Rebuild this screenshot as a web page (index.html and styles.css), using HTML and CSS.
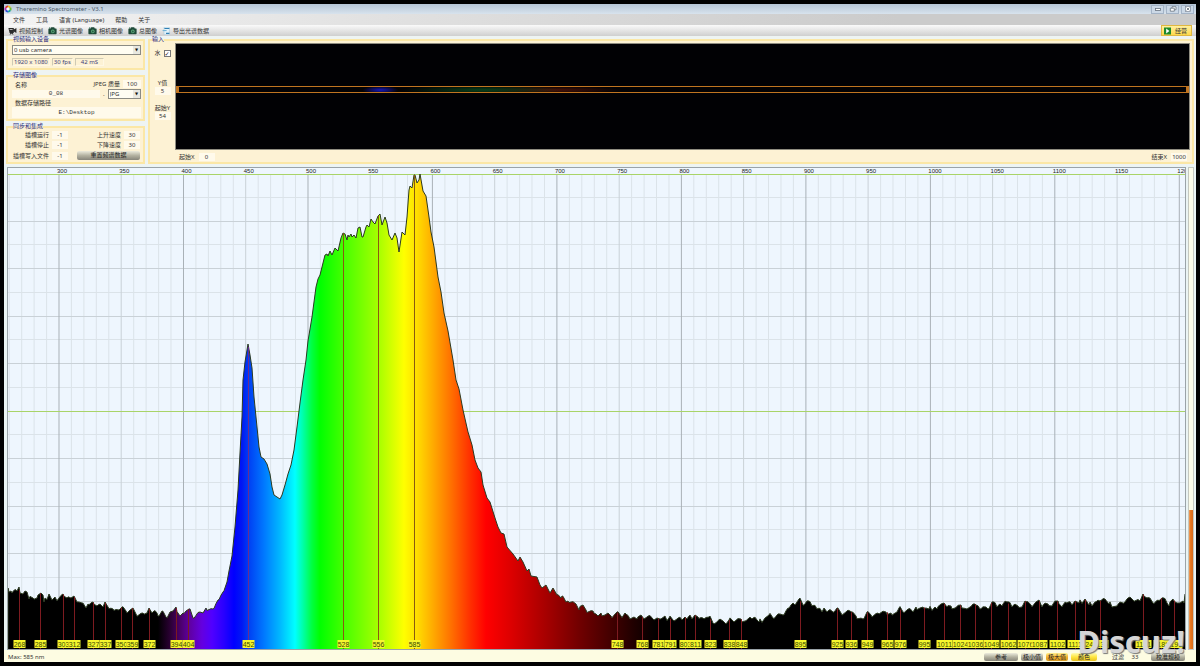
FILE: index.html
```
<!DOCTYPE html>
<html lang="zh-CN">
<head>
<meta charset="utf-8">
<title>Theremino Spectrometer - V3.1</title>
<link rel="stylesheet" href="styles.css">
</head>
<body>
<svg class="defs" aria-hidden="true">
  <symbol id="camera" viewBox="0 0 9 8">
    <path d="M2.6 1.6 L3.2 .3 H6.2 L6.8 1.6 H8 Q8.6 1.6 8.6 2.3 V6.6 Q8.6 7.3 8 7.3 H1 Q.4 7.3 .4 6.6 V2.3 Q.4 1.6 1 1.6Z" fill="#1f4a38"/>
    <circle cx="4.8" cy="4.4" r="1.8" fill="#5fae7c"/><circle cx="4.8" cy="4.4" r="1" fill="#2a5a44"/>
    <path d="M1 .6h1.4v1H1z" fill="#2f6a50"/>
  </symbol>
</svg>
<main class="window">
  <header class="titlebar">
    <svg class="logo" viewBox="0 0 10 10" aria-hidden="true">
      <g fill="none" stroke-width="2.4">
        <path d="M5 1.8A3.2 3.2 0 0 1 7.8 3.4" stroke="#e8c61c"/>
        <path d="M7.8 3.4A3.2 3.2 0 0 1 7.8 6.6" stroke="#6cc030"/>
        <path d="M7.8 6.6A3.2 3.2 0 0 1 5 8.2" stroke="#1fa6a0"/>
        <path d="M5 8.2A3.2 3.2 0 0 1 2.2 6.6" stroke="#2c55d8"/>
        <path d="M2.2 6.6A3.2 3.2 0 0 1 2.2 3.4" stroke="#b02cb8"/>
        <path d="M2.2 3.4A3.2 3.2 0 0 1 5 1.8" stroke="#e2402a"/>
      </g>
      <circle cx="5" cy="5" r="1.8" fill="#fff"/>
    </svg>
    <h1>Theremino Spectrometer - V3.1</h1>
    <div class="winbtns">
      <button aria-label="最小化"><svg viewBox="0 0 8 6"><rect x="1.5" y="2.5" width="5" height="2" fill="#fff" stroke="#66717e" stroke-width=".8"/></svg></button>
      <button aria-label="还原"><svg viewBox="0 0 8 6"><path d="M3 .7h4v3H3z" fill="#fff" stroke="#66717e" stroke-width=".8"/><path d="M1.3 2.2h4v3h-4z" fill="#fff" stroke="#66717e" stroke-width=".8"/></svg></button>
      <button aria-label="关闭"><svg viewBox="0 0 8 6"><rect x="1.5" y=".5" width="5" height="5" fill="#fff" stroke="#7c8794" stroke-width=".7"/><path d="M2.6 1.6l2.8 2.8M5.4 1.6L2.6 4.4" stroke="#5e6874" stroke-width=".8"/></svg></button>
    </div>
  </header>
  <nav class="menu">
    <button>文件</button><button>工具</button><button>语言 (Language)</button><button>帮助</button><button>关于</button>
  </nav>
  <div class="toolbar">
    <button><svg class="ic" viewBox="0 0 9 8"><path d="M.4 1h5.4v1.4L8.4 1v5L5.8 4.6V6H4.6l1 1.6h-1L3.6 6.4 2.4 7.6H1.6L2.4 6H1.6z" fill="#2b2b2b"/><path d="M1.6 2h3v1h-3z" fill="#b8b8b8"/></svg>视频控制</button>
    <button><svg class="ic"><use href="#camera"/></svg>光谱图像</button>
    <button><svg class="ic"><use href="#camera"/></svg>相机图像</button>
    <button><svg class="ic"><use href="#camera"/></svg>总图像</button>
    <button><svg class="ic" viewBox="0 0 9 8"><path d="M2 .3h5.4v7.4H2z" fill="#e4f3fa" stroke="#9cc4d8" stroke-width=".5"/><path d="M2.4 1h5v1.1h-5zM4 5.8h3.4v1.3H4z" fill="#2f7fb4"/><path d="M.6 3.6h4" stroke="#6ab0d4"/></svg>导出光谱数据</button>
    <button class="run"><svg class="ic" viewBox="0 0 9 8"><rect x="1" y=".5" width="7" height="7" fill="#1c8a2c"/><path d="M3.2 1.6L6.4 4 3.2 6.4z" fill="#fff"/></svg>经营</button>
  </div>

  <section class="controls">
    <div class="side">
      <fieldset class="device">
        <legend>视频输入设备</legend>
        <span class="drop"><select aria-label="视频输入设备"><option>0 usb camera</option></select></span>
        <div class="info"><span>1920 x 1080</span><span>30 fps</span><span>42 mS</span></div>
      </fieldset>
      <fieldset class="store">
        <legend>存储图像</legend>
        <div class="line"><label class="name" for="fname">名称</label><label for="q">JPEG 质量</label><input id="q" class="num" value="100"></div>
        <div class="line file"><input id="fname" class="mono" value="0_08"><span>.</span><span class="drop"><select aria-label="格式"><option>JPG</option></select></span></div>
        <label class="path" for="dir">数据存储路径</label>
        <input id="dir" class="mono" value="E:\Desktop">
      </fieldset>
      <fieldset class="sync">
        <legend>同步和集成</legend>
        <div class="slots">
          <label for="s1">插槽运行</label><input id="s1" value="-1"><label for="up">上升速度</label><input id="up" value="30">
          <label for="s2">插槽停止</label><input id="s2" value="-1"><label for="dn">下降速度</label><input id="dn" value="30">
          <label for="s3">插槽写入文件</label><input id="s3" value="-1"><button class="pill">重置频谱数据</button>
        </div>
      </fieldset>
    </div>
    <fieldset class="input">
      <legend>输入</legend>
      <div class="feed">
        <div class="ycol">
          <label class="flip">水<input type="checkbox" checked></label>
          <label for="yv">Y值</label><input id="yv" value="5">
          <label class="ystart" for="ys">起始Y</label><input id="ys" value="54">
        </div>
        <div class="video"><div class="band"></div></div>
      </div>
      <div class="xrow"><label for="xs">起始X</label><input id="xs" value="0"><label class="end" for="xe">结束X</label><input id="xe" value="1000"></div>
    </fieldset>
  </section>

  <section class="plot">
    <svg id="chart" class="chart" role="img" aria-label="光谱"></svg>
    <div class="level"><div class="fill"></div></div>
  </section>

  <footer class="status">
    <span class="max">Max: 585 nm</span>
    <button class="pill ref">参考</button>
    <button class="pill">极小值</button>
    <button class="pill gold">极大值</button>
    <button class="pill yellow">颜色</button>
    <label for="filter">过滤</label><input id="filter" value="33">
    <button class="pill scale">校准规模</button>
  </footer>
  <div class="watermark">Discuz!</div>
</main>
<script src="chart.js"></script>
</body>
</html>
```
FILE: styles.css
```
* { box-sizing: border-box; }
body {
  margin: 0;
  background: #000;
  color: #333;
  font: 6px/8px "Noto Sans", "Noto Sans CJK SC", sans-serif;
}
button, input, select {
  appearance: none;
  margin: 0;
  padding: 0;
  border: 0;
  border-radius: 0;
  background: none;
  color: inherit;
  font: inherit;
}
input, select { min-width: 0; }
input { height: 8px; background: #fffaeb; text-align: center; }
.defs { position: absolute; width: 0; height: 0; }
.window {
  position: relative;
  display: flex;
  flex-direction: column;
  min-height: calc(100vh - 8px);
  margin: 4px;
  background: #eef4f3;
}

.titlebar {
  display: flex;
  align-items: center;
  height: 10px;
  padding: 0 2px 0 0;
  background: linear-gradient(#b4c4d4, #d8e3ed);
}
.logo { width: 8px; height: 8px; margin-right: 4px; }
.titlebar h1 { flex: 1; margin: 0; font-size: 6px; font-weight: 400; color: #4a5868; }
.winbtns { display: flex; gap: 2px; }
.winbtns button {
  display: flex;
  justify-content: center;
  align-items: center;
  width: 13px;
  height: 9px;
  border: 1px solid #a3b3c6;
  background: #cbd8e6;
}
.winbtns svg { width: 8px; height: 6px; }

.menu {
  display: flex;
  gap: 11px;
  height: 11px;
  padding-left: 9px;
  background: linear-gradient(90deg, #f3f3f3, #e2e2e2 30%, #cbcbcb 75%);
}
.toolbar {
  display: flex;
  gap: 5px;
  height: 11px;
  padding: 0 4px;
  background: linear-gradient(#fafafa, #cfcfcf);
}
.toolbar button { display: flex; align-items: center; gap: 2px; }
.ic { width: 9px; height: 8px; }
.toolbar .run {
  gap: 3px;
  width: 31px;
  margin-left: auto;
  padding-left: 1px;
  border: 1px solid #e0b840;
  background: linear-gradient(#fff0a0, #ffd84a);
}

.controls { display: flex; gap: 3px; padding: 0 2px 2px; }
.side { display: flex; flex-direction: column; width: 139px; gap: 2px; }
fieldset {
  min-width: 0;
  margin: 0;
  padding: 1px 3px 2px;
  border: 2px solid #fbe7a6;
  background: #fdf2d4;
}
legend { height: 7px; margin-left: 1px; padding: 0; line-height: 7px; color: #2b2b7a; }
.device { padding: 2px 2px 2px 4px; }
.drop { position: relative; display: block; }
.drop select {
  display: block;
  width: 100%;
  height: 10px;
  padding-left: 1px;
  border: 1px solid #8b8b83;
  background: #fffdf2;
}
.drop::after {
  content: "▼";
  position: absolute;
  top: 1px;
  right: 1px;
  width: 7px;
  height: 8px;
  background: #e8e8e0;
  color: #111;
  font: 4px/8px "DejaVu Sans", sans-serif;
  text-align: center;
  pointer-events: none;
}
.info { display: flex; gap: 2px; margin-top: 3px; color: #42427c; }
.info span { padding: 0 1px; border: 1px solid; border-color: #cfcab4 #fff8e4 #fff8e4 #cfcab4; line-height: 6px; }
.info span:last-child { padding: 0 5px; }
.mono { font-family: "Liberation Mono", monospace; }
.line { display: flex; align-items: center; gap: 3px; }
.store { padding: 0 2px 1px 4px; }
.store .name { flex: 1; padding: 2px 0 0 3px; }
.num { width: 18px; }
.file .mono { width: 88px; }
.file .drop { flex: 1; }
.path { display: block; padding-left: 3px; }
.path + input { display: block; width: 100%; height: 11px; }
.slots {
  display: grid;
  grid-template-columns: 38px 16px 50px 16px;
  gap: 2px 3px;
  align-items: center;
  text-align: right;
}
.sync { padding: 1px 0 2px 3px; }
.sync legend { margin-left: 2px; }
.pill {
  height: 9px;
  padding: 0 2px;
  border-radius: 2px;
  background: linear-gradient(#ecebdc, #b3b1a0 50%, #87857a);
  line-height: 9px;
}
.slots .pill { grid-column: 3 / 5; margin-left: 6px; color: #222; }

.input { flex: 1; display: flex; flex-direction: column; padding: 0 2px 1px 1px; }
.feed { display: flex; flex: 1; gap: 1px; }
.ycol { display: flex; flex-direction: column; align-items: center; width: 23px; padding-top: 6px; }
.ycol > input { width: 16px; }
.flip { display: flex; align-items: center; gap: 3px; margin-bottom: 22px; }
.flip input { width: 7px; height: 7px; border: 1px solid #777; background: #fff; }
.flip input:checked::before {
  content: "✓";
  display: block;
  color: #111;
  font: 6px/5px "DejaVu Sans", sans-serif;
}
.ystart { margin-top: 9px; }
.video { position: relative; flex: 1; border: 1px solid #8f8c80; background: #010104; }
.band {
  position: absolute;
  top: 40%;
  left: 0;
  right: 0;
  height: 7px;
  border: 1px solid #c07420;
  border-width: 1px 3px;
  background:
    radial-gradient(ellipse 18px 4px at 20% 60%, #1616b8, transparent),
    radial-gradient(ellipse 8% 5px at 30% 60%, #08401a, transparent),
    radial-gradient(ellipse 7% 4px at 37% 60%, #4a1208, transparent),
    #030204;
}
.xrow { display: flex; height: 11px; padding: 3px 3px 0 28px; gap: 4px; }
.xrow input { width: 16px; }
.xrow .end { margin-left: auto; }

.plot { display: flex; flex: 1; gap: 2px; padding: 1px 2px 0 3px; background: #eaf4f4; }
.chart { flex: 1; min-width: 0; height: auto; border: 1px solid #9aa3a8; background: #eef6fe; overflow: hidden; }
.chart text { font: 6px "Liberation Sans", sans-serif; fill: #222; }
.chart .tag text { font-size: 7px; fill: #3a4a00; text-anchor: middle; }
.chart .tag rect { fill: #f6f62e; }
.chart path { fill: none; vector-effect: non-scaling-stroke; }
.chart .minor { stroke: #dbe3e9; }
.chart .half { stroke: #c9d1d7; }
.chart .major { stroke: #a9b1b7; }
.chart .green { stroke: #a9d468; shape-rendering: crispEdges; }
.chart .area { fill: url(#spectrum); stroke: #2c3a20; stroke-width: 1px; }
.chart .peak { stroke: #7d1b20; }
.chart .peak.low { stroke: #6a2a90; }
.chart .peak.tall { stroke: #8a5a10; }
.level { display: flex; flex-direction: column; justify-content: flex-end; width: 6px; border: 1px solid #c4c8c0; background: #fbfbe8; }
.level .fill { height: 29%; background: linear-gradient(90deg, #f0a060, #e87820 40%, #d86c1c); }

.status { display: flex; align-items: center; gap: 3px; height: 12px; padding: 2px 11px 0 4px; background: #fdfce2; }
.status .max { flex: 1; }
.status .pill { min-width: 22px; height: 8px; line-height: 8px; color: #222; }
.status .ref, .status .scale { width: 34px; }
.status .gold { background: linear-gradient(#fff08a, #f0b030 50%, #d89a20); }
.status .yellow { width: 26px; background: linear-gradient(#fffbb0, #ffe640 50%, #e8c020); }
.status label { margin-left: 12px; }
.status input { width: 16px; margin-right: 5px; background: none; }
.watermark {
  position: absolute;
  right: 11px;
  bottom: 3px;
  color: #d6d6d6;
  font: 700 31px/36px "Noto Sans", sans-serif;
  text-shadow: 1px 1px 1px #777;
  pointer-events: none;
}
```
FILE: chart.js
```
// Drawing space of the plot: x 8..1185, y 168..649.
const X0 = 8, Y0 = 168, W = 1177, H = 481, BASE = 649;
const xOf = nm => 59 + (nm - 300) * 1.2448;
const pct = x => ((x - X0) / W * 100) + "%";

const curve = `8,588 9,592 11,591 12,593 17,591 19,587 20,593 23,594 25,591 27,592 29,599 33,598 37,598 38,595 41,593 43,595 44,602 49,594 51,598 55,597 56,599 63,594 67,598 71,598 74,596 77,602 79,602 82,603 86,608 88,604 93,602 97,606 103,607 105,602 108,607 113,609 119,610 122,607 126,611 130,610 133,608 136,614 143,613 147,613 149,608 152,613 157,613 158,616 162,611 166,617 170,612 173,611 176,607 180,616 183,613 189,609 193,618 200,612 203,613 206,608 213,609 218,600 223,592 227,582 229,571 232,556 235,527 238,490 240,453 242,417 243,380 245,362 248,344 250,355 252,368 254,397 257,427 259,447 261,457 264,459 267,464 270,474 272,487 274,495 277,497 280,499 282,495 285,485 288,474 291,465 294,450 297,427 300,403 303,380 306,360 308,341 312,317 316,287 318,279 320,275 325,255 327,254 328,256 330,251 332,255 335,248 338,251 341,238 343,233 345,234 347,240 348,235 349,237 351,234 352,237 354,235 356,238 358,228 360,227 362,237 363,237 366,227 367,225 369,227 371,219 373,222 375,224 378,216 380,214 382,225 385,217 387,223 389,235 392,240 395,233 397,238 399,252 402,232 405,235 407,217 409,190 410,186 412,188 414,175 415,175 417,183 419,180 420,174 423,191 426,196 429,217 431,232 434,247 438,277 441,292 444,313 448,331 453,360 456,380 459,389 463,410 468,432 472,445 475,460 478,468 481,472 483,485 487,498 490,502 495,518 498,527 501,533 504,534 507,547 513,554 518,561 520,557 523,562 527,571 529,569 531,576 537,577 540,585 542,588 546,585 550,593 553,588 557,595 561,598 562,596 566,602 568,601 576,604 579,610 583,605 586,610 593,611 598,616 601,613 605,615 608,613 611,616 617,612 621,616 625,613 630,619 634,617 637,619 641,615 644,619 647,617 653,619 657,618 660,619 669,618 673,620 677,619 682,620 685,617 687,619 695,615 698,617 703,618 709,617 713,623 717,622 723,621 726,624 729,620 733,621 741,619 745,621 752,619 757,620 759,622 765,618 769,615 773,618 780,614 783,615 788,608 793,603 795,605 799,599 803,605 807,601 812,606 817,609 822,612 824,608 827,612 833,612 837,608 841,613 850,611 856,616 863,619 867,612 871,615 878,613 886,612 891,613 897,612 899,608 903,612 907,610 913,612 916,607 920,608 923,607 929,609 935,607 937,609 941,604 944,603 947,607 951,606 955,608 961,605 967,609 970,607 975,604 980,609 986,607 988,609 992,602 997,607 1002,606 1007,602 1012,607 1018,606 1022,607 1025,601 1031,605 1039,600 1042,607 1048,604 1052,606 1058,601 1062,607 1067,603 1072,605 1075,601 1079,603 1085,599 1089,605 1095,602 1100,601 1105,599 1109,604 1117,606 1123,603 1127,599 1133,600 1140,601 1143,594 1147,598 1153,603 1158,600 1162,598 1167,603 1169,606 1173,599 1177,603 1180,603 1183,601 1184,603 1185,594`
  .split(" ").map(p => p.split(",").map(Number));

function yAt(x) {
  const i = Math.max(1, curve.findIndex(p => p[0] >= x));
  const [ax, ay] = curve[i - 1], [bx, by] = curve[i];
  return ay + (by - ay) * (x - ax) / (bx - ax);
}

// Sensor noise along the dark ends of the spectrum.
let area = `M${X0} ${BASE + 2}`;
curve.forEach(([x, y], i) => {
  area += `L${x} ${y}`;
  const next = curve[i + 1];
  if (next && y > 590 && next[0] - x > 3) {
    for (let k = x + 1; k < next[0] - 1; k += 2) {
      area += `L${k} ${(yAt(k) + ((k * 37) % 5) * 1.2 - 2.4).toFixed(1)}`;
    }
  }
});
area += `L1186 594V${BASE + 2}Z`;

const stops = [[8,"#000"],[158,"#000"],[170,"#2a0033"],[180,"#4a0068"],[190,"#6000a4"],[202,"#6400e0"],[212,"#5000ff"],[224,"#2800ff"],[234,"#0000ff"],[242,"#0018f4"],[250,"#0044f4"],[264,"#0078ff"],[280,"#00b8ff"],[295,"#00ffff"],[304,"#00ff9c"],[312,"#00ff40"],[320,"#00ff00"],[343,"#44ff00"],[378,"#a4ff00"],[404,"#ffff00"],[416,"#ffe000"],[430,"#ffb400"],[450,"#ff7400"],[470,"#ff3000"],[486,"#ff0000"],[510,"#de0000"],[545,"#a80000"],[580,"#700000"],[610,"#440000"],[635,"#1e0000"],[658,"#000"]];

let minor = "", half = "", major = "", names = "";
for (let nm = 260; nm <= 1200; nm += 10) {
  const x = xOf(nm).toFixed(1), line = `M${x} 174V${BASE}`;
  if (nm % 100 === 0) major += line; else if (nm % 50 === 0) half += line; else minor += line;
  if (nm % 50 === 0 && nm >= 300) names += `<text x="${pct(xOf(nm) - 2)}" y="5">${nm}</text>`;
}
for (let i = 1; i < 20; i++) {
  if (i === 10) continue;
  const line = `M${X0} ${173.5 + Math.round(i * 23.75)}H1186`;
  if (i % 2) minor += line; else half += line;
}

const peaks = [268,285,303,312,327,337,350,359,372,394,404,452,528,556,585,748,768,781,791,803,811,823,838,848,895,925,936,949,965,976,995,1011,1024,1036,1049,1062,1076,1087,1102,1116,1124,1136,1171,1185,1196];
let lines = "", tags = "";
for (const nm of peaks) {
  const x = Math.round(xOf(nm)) + 0.5, w = nm > 999 ? 16 : 12;
  const kind = nm >= 528 && nm <= 585 ? " tall" : nm === 452 ? " low" : "";
  lines += `<path class="peak${kind}" d="M${x} ${yAt(x).toFixed(1)}V${BASE}"/>`;
  tags += `<svg class="tag" x="${pct(x)}" y="100%" overflow="visible"><rect x="${-w / 2}" y="-9" width="${w}" height="8"/><text x="0" y="-2">${nm}</text></svg>`;
}

document.getElementById("chart").innerHTML = `
  <defs><linearGradient id="spectrum" gradientUnits="userSpaceOnUse" x1="${X0}" x2="${X0 + W}" y1="0" y2="0">
    ${stops.map(([x, c]) => `<stop offset="${(x - X0) / W}" stop-color="${c}"/>`).join("")}
  </linearGradient></defs>
  <svg width="100%" height="100%" viewBox="${X0} ${Y0} ${W} ${H}" preserveAspectRatio="none">
    <path class="minor" d="${minor}"/><path class="half" d="${half}"/><path class="major" d="${major}"/>
    <path class="green" d="M${X0} 174.5H1186"/><path class="green" d="M${X0} 411.5H1186"/>
    <path class="area" d="${area}"/>${lines}
  </svg>${names}${tags}`;
```
